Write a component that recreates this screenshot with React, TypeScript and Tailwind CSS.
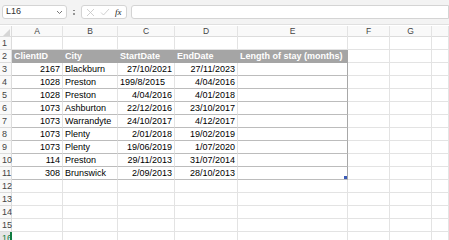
import React from 'react';

const COLS = ['A', 'B', 'C', 'D', 'E', 'F', 'G', ''];
const GRID = 'grid grid-cols-[12px_51px_55px_57px_63px_110px_42px_42px_1fr]';

type Row = [string, string, string, string, boolean?];

const rows: Row[] = [
  ['2167', 'Blackburn', '27/10/2021', '27/11/2023'],
  ['1028', 'Preston', '199/8/2015', '4/04/2016', true],
  ['1028', 'Preston', '4/04/2016', '4/01/2018'],
  ['1073', 'Ashburton', '22/12/2016', '23/10/2017'],
  ['1073', 'Warrandyte', '24/10/2017', '4/12/2017'],
  ['1073', 'Plenty', '2/01/2018', '19/02/2019'],
  ['1073', 'Plenty', '19/06/2019', '1/07/2020'],
  ['114', 'Preston', '29/11/2013', '31/07/2014'],
  ['308', 'Brunswick', '2/09/2013', '28/10/2013'],
];

const FormulaBar = () => (
  <div className="flex items-center h-[25px] bg-[#f3f3f3] pl-[2px] gap-[4px] border-b border-[#e0e0e0]">
    <div className="flex items-center justify-between w-[65px] h-[14px] bg-white border border-[#d4d4d4] rounded-[3px] px-[3px]">
      <span className="text-[9px] text-[#333]">L16</span>
      <svg width="7" height="5" viewBox="0 0 7 5"><path d="M1 1l2.5 2.5L6 1" fill="none" stroke="#666" strokeWidth="0.9" /></svg>
    </div>
    <div className="flex flex-col gap-[2px] w-[6px] items-center">
      <span className="w-[1.5px] h-[1.5px] bg-[#777] rounded-full" />
      <span className="w-[1.5px] h-[1.5px] bg-[#777] rounded-full" />
    </div>
    <div className="flex items-center gap-[5px] w-[46px] h-[14px] bg-white border border-[#d4d4d4] rounded-[3px] px-[4px]">
      <svg width="9" height="9" viewBox="0 0 9 9"><path d="M1 1l7 7M8 1L1 8" stroke="#c4c4c4" strokeWidth="0.8" /></svg>
      <svg width="10" height="8" viewBox="0 0 10 8"><path d="M1 4.5l2.5 2.5L9 1" fill="none" stroke="#c4c4c4" strokeWidth="0.8" /></svg>
      <span className="text-[9px] italic text-[#222] font-['Liberation_Serif',serif] leading-none">fx</span>
    </div>
    <div className="flex-1 h-[14px] bg-white border border-[#d4d4d4] rounded-l-[3px]" />
  </div>
);

const Cell = ({ children, className = '' }: { children?: React.ReactNode; className?: string }) => (
  <div className={`h-[13px] border-r border-b border-[#e3e3e3] px-[2px] leading-[13px] whitespace-nowrap overflow-hidden ${className}`}>
    {children}
  </div>
);

const RowNum = ({ n }: { n: number }) => (
  <div className="h-[13px] pl-[2px] leading-[13px] text-[#444] border-r border-b border-[#dcdcdc] bg-[#f9f9f9]">{n}</div>
);

export default function App() {
  return (
    <div className="w-[449px] h-[240px] overflow-hidden bg-white font-['Liberation_Sans',sans-serif] text-[9px] text-black">
      <FormulaBar />
      <div className="h-[1px] bg-white" />
      <div className={`${GRID} h-[11px] bg-[#f9f9f9] border-b border-[#dcdcdc] text-[#444] leading-[11px]`}>
        <div className="relative border-r border-[#dcdcdc]">
          <svg className="absolute right-[1px] bottom-[1px]" width="7" height="7" viewBox="0 0 7 7"><path d="M7 0V7H0Z" fill="#d6d6d6" /></svg>
        </div>
        {COLS.map((c, i) => (
          <div key={i} className="text-center border-r border-[#e3e3e3] text-[8.5px]">{c}</div>
        ))}
      </div>
      <div className={GRID}>
        <RowNum n={1} />
        {COLS.map((c, i) => <Cell key={i} />)}
        <RowNum n={2} />
        {['ClientID', 'City', 'StartDate', 'EndDate', 'Length of stay (months)'].map((t) => (
          <div key={t} className="h-[13px] bg-[#a5a5a5] text-white font-bold px-[2px] leading-[13px] whitespace-nowrap">{t}</div>
        ))}
        <Cell /><Cell /><Cell />
        {rows.map((r, i) => {
          const last = i === rows.length - 1;
          return (
            <React.Fragment key={i}>
              <RowNum n={i + 3} />
              <Cell className="text-right !border-b-[#bcbcbc]">{r[0]}</Cell>
              <Cell className="!border-b-[#bcbcbc]">{r[1]}</Cell>
              <Cell className={`${r[4] ? 'text-left' : 'text-right'} !border-b-[#bcbcbc]`}>{r[2]}</Cell>
              <Cell className="text-right !border-b-[#bcbcbc]">{r[3]}</Cell>
              <Cell className="relative !border-b-[#bcbcbc] !border-r-[#a8a8a8]">
                {last && <span className="absolute right-0 bottom-0 w-[3px] h-[3px] bg-[#3b5cb8]" />}
              </Cell>
              <Cell /><Cell /><Cell />
            </React.Fragment>
          );
        })}
        {[12, 13, 14, 15].map((n) => (
          <React.Fragment key={n}>
            <RowNum n={n} />
            {COLS.map((c, i) => <Cell key={i} />)}
          </React.Fragment>
        ))}
        <div className="h-[13px] pl-[2px] leading-[13px] border-b border-[#dcdcdc] bg-[#e6e6e6] text-[#107c41] border-r-2 border-r-[#107c41]">16</div>
        {COLS.map((c, i) => <Cell key={i} />)}
      </div>
    </div>
  );
}
